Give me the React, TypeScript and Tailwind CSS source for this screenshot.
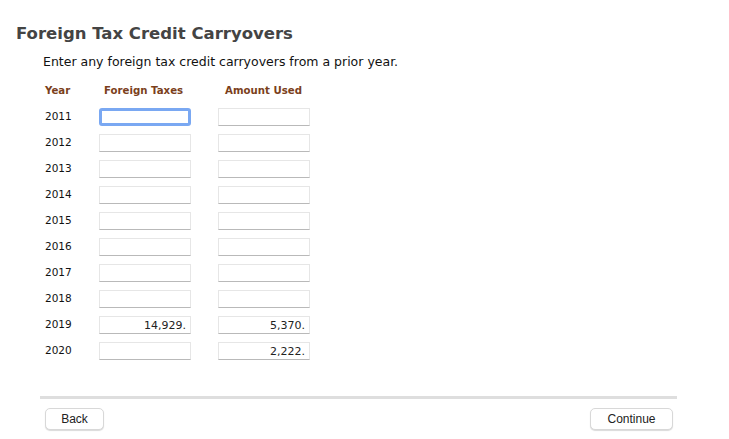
const years = [
  { year: "2011", foreign: "", used: "", focused: true },
  { year: "2012", foreign: "", used: "" },
  { year: "2013", foreign: "", used: "" },
  { year: "2014", foreign: "", used: "" },
  { year: "2015", foreign: "", used: "" },
  { year: "2016", foreign: "", used: "" },
  { year: "2017", foreign: "", used: "" },
  { year: "2018", foreign: "", used: "" },
  { year: "2019", foreign: "14,929.", used: "5,370." },
  { year: "2020", foreign: "", used: "2,222." },
];

const inputClass =
  "h-[18px] w-[92px] border border-[#e6e6e6] border-b-[#b9b9b9] bg-white px-1 text-right text-[11px] leading-[16px] text-[#222] outline-none";

const font = { fontFamily: '"DejaVu Sans", "Open Sans", sans-serif' };

export default function App() {
  return (
    <div className="h-[439px] w-[729px] overflow-hidden bg-white" style={font}>
      <div className="pl-[16px] pt-[22px]">
        <h1 className="text-[16.5px] font-bold leading-[24px] text-[#444]">Foreign Tax Credit Carryovers</h1>
        <p className="mt-[8px] pl-[27px] text-[12.5px] leading-[16px] text-[#111]">
          Enter any foreign tax credit carryovers from a prior year.
        </p>
      </div>

      <div className="mt-[13px] pl-[45px]">
        <div className="grid h-[16px] grid-cols-[54px_92px_27px_92px] items-center text-[10.2px] font-bold text-[#7b3f1c]">
          <span>Year</span>
          <span className="pl-[5px]">Foreign Taxes</span>
          <span />
          <span className="pl-[7px]">Amount Used</span>
        </div>
        <div className="mt-[5px]">
          {years.map((row) => (
            <div key={row.year} className="grid h-[26px] grid-cols-[54px_92px_27px_92px] items-center">
              <span className="text-[10.5px] text-[#111]">{row.year}</span>
              <input
                readOnly
                value={row.foreign}
                className={
                  row.focused
                    ? "h-[18px] w-[92px] rounded-[3px] border-[3px] border-[#7aa8f2] bg-white px-1 outline-none"
                    : inputClass
                }
              />
              <span />
              <input readOnly value={row.used} className={inputClass} />
            </div>
          ))}
        </div>
      </div>

      <div className="ml-[40px] mt-[32px] h-[3px] w-[637px] bg-[#dedede]" />
      <div className="flex w-[673px] justify-between pl-[45px] pt-[9px]" style={{ fontFamily: '"Liberation Sans", Arial, sans-serif' }}>
        <button className="h-[22px] w-[59px] rounded-[5px] border border-[#d8d8d8] bg-white text-[12px] text-[#222] shadow-[0_1px_1px_rgba(0,0,0,0.15)]">
          Back
        </button>
        <button className="h-[22px] w-[83px] rounded-[5px] border border-[#d8d8d8] bg-white text-[12px] text-[#222] shadow-[0_1px_1px_rgba(0,0,0,0.15)]">
          Continue
        </button>
      </div>
    </div>
  );
}
